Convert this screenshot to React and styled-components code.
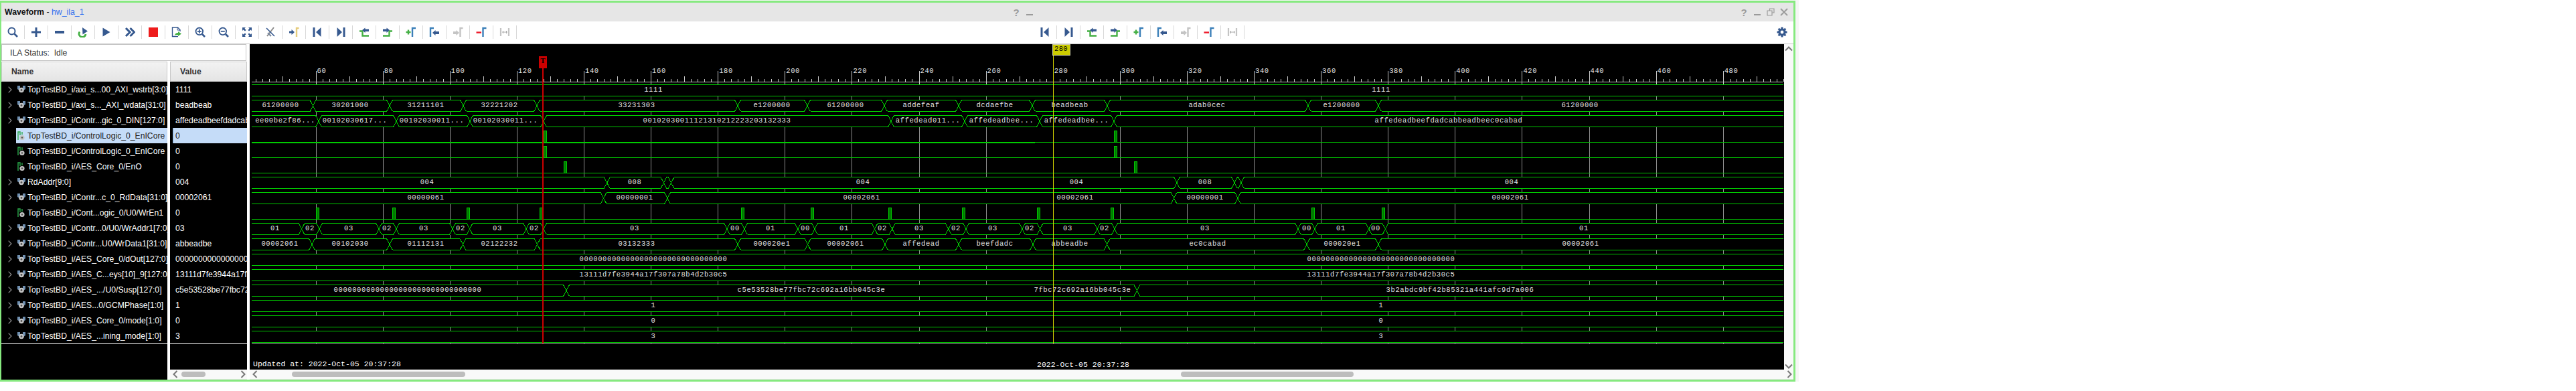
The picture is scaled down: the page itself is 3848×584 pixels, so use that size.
import React from "react";
import styled, { createGlobalStyle } from "styled-components";

const Global = createGlobalStyle`
  html, body { margin: 0; padding: 0; background: #fff; }
  body { font-family: "Liberation Sans", Arial, sans-serif; }
`;

const Window = styled.div`
  box-sizing: border-box; width: 2682px; height: 569px; margin-top: 1px;
  border: solid #86e97f; border-width: 3px 3px 3px 2px;
  box-shadow: 2px 2px 0 3px #f6f6f6;
  display: flex; flex-direction: column; background: #fff; overflow: hidden;
`;
const TitleBar = styled.div`
  height: 28px; flex: none; background: #e6e6e6; display: flex; align-items: center;
`;
const TitleSide = styled.div`
  width: 1506px; flex: none; padding-left: 5px; box-sizing: border-box;
  font-size: 12.3px; color: #222; white-space: nowrap;
  b { font-weight: 700; color: #111; }
  a { color: #2f6fef; }
`;
const TitleSpacer = styled.div` flex: 1; `;
const TitleSlot = styled.div`
  width: 20px; height: 20px; flex: none; display: flex; align-items: center; justify-content: center;
  color: #9a9a9a; font-weight: 700; font-size: 15px;
`;
const TitleEnd = styled.div` display: flex; padding-right: 4px; `;
const Toolbar = styled.div`
  height: 32px; flex: none; background: #fff; border-bottom: 2px solid #e4e4e4;
  display: flex; align-items: center;
`;
const ToolGroup = styled.div`
  display: flex; align-items: center; flex: none; margin-left: ${p => p.$offset || 0}px;
`;
const ToolItem = styled.div`
  width: 34px; height: 32px; flex: none; display: flex; align-items: center; justify-content: center;
  border-right: 1px solid transparent; position: relative;
  &::after { content: ""; position: absolute; right: -1px; top: 6px; width: 1px; height: 20px; background: #d8d8d8; }
`;
const GearSlot = styled.div`
  margin-left: auto; width: 34px; height: 32px; display: flex; align-items: center; justify-content: center;
`;
const Main = styled.div` flex: 1; display: flex; min-height: 0; `;
const LeftPane = styled.div` width: 371px; flex: none; display: flex; flex-direction: column; background: #fff; `;
const Status = styled.div`
  box-sizing: border-box; width: 366px; height: 25px; flex: none; margin-bottom: 1px;
  border: 1px solid #c4c4c4; padding-left: 12px; display: flex; align-items: center;
  font-size: 12.2px; color: #333; white-space: pre;
`;
const Columns = styled.div` flex: 1; display: flex; min-height: 0; `;
const NameCol = styled.div` width: 248px; flex: none; display: flex; flex-direction: column; background: #000; overflow: hidden; `;
const ValueCol = styled.div` width: 115px; margin-left: 4px; flex: none; display: flex; flex-direction: column; background: #000; overflow: hidden; `;
const Header = styled.div`
  height: 30px; flex: none; box-sizing: border-box; display: flex; align-items: center;
  padding-left: ${p => p.$pad}px; background: linear-gradient(#f2f2f2, #e4e4e4);
  border: 1px solid #c8c8c8; font-weight: 700; font-size: 12.2px; color: #333;
`;
const Rows = styled.div`
  height: 391px; flex: none; border-bottom: 1px solid #fff; font-size: 12.2px;
`;
const Fill = styled.div` flex: 1; `;
const Row = styled.div` height: 23px; display: flex; align-items: stretch; `;
const Chev = styled.div`
  width: 22px; flex: none; box-sizing: border-box; padding-left: 10px; display: flex; align-items: center;
`;
const RowBody = styled.div`
  flex: 1; min-width: 0; display: flex; align-items: center; gap: 3px; padding-left: 1px;
  background: ${p => (p.$sel ? "#c5dcf8" : "transparent")};
  color: ${p => (p.$sel ? "#222" : "#fff")};
`;
const RowIcon = styled.div` width: 13px; flex: none; display: flex; align-items: center; justify-content: center; `;
const RowText = styled.div` white-space: nowrap; overflow: hidden; flex: 1; `;
const ValueCell = styled.div`
  height: 23px; box-sizing: border-box; display: flex; align-items: center; white-space: nowrap; overflow: hidden;
  margin-left: ${p => (p.$sel ? 4 : 0)}px;
  padding-left: ${p => (p.$sel ? 3 : 8)}px;
  border-left: ${p => (p.$sel ? "1px solid #7aa7d8" : "none")};
  background: ${p => (p.$sel ? "#c5dcf8" : "#000")};
  color: ${p => (p.$sel ? "#222" : "#fff")};
`;
const WaveArea = styled.div` flex: 1; min-width: 0; display: flex; flex-direction: column; `;
const WaveTop = styled.div` height: 486px; flex: none; display: flex; `;
const WaveSvg = styled.svg`
  width: 2292px; height: 486px; flex: none; display: block; background: #000;
  shape-rendering: crispEdges;
  text { font-family: "Liberation Mono", monospace; font-size: 10.5px; letter-spacing: .6px; fill: #e4e4e4; }
`;
const VScroll = styled.div`
  flex: 1; background: #f9f9f9; display: flex; flex-direction: column; justify-content: space-between; align-items: center;
  padding: 3px 0 1px; 
`;
const HBar = styled.div`
  flex: ${p => (p.$fixed ? "0 0 14px" : "1")}; min-height: 0; background: #f9f9f9; display: flex; align-items: center; border-bottom: 1px solid #e4e4e4;
  padding: 0 ${p => p.$padR}px 0 ${p => p.$padL}px;
`;
const Thumb = styled.div`
  height: 8px; border-radius: 4px; background: #bdbdbd; flex: none;
  width: ${p => p.$w}px; margin-left: ${p => p.$ml}px;
`;
const ArrowEnd = styled.div` margin-left: auto; display: flex; `;

const B = "#36598f", G = "#45b045", Gy = "#c4c4c4";
const Ic = ({ children, w = 16, h = 16 }) => <svg width={w} height={h} viewBox="0 0 16 16">{children}</svg>;

const Search = () => <Ic><circle cx="6.5" cy="6.5" r="5" fill="none" stroke={B} strokeWidth="2"/><path d="M10.5 10.5L15 15" stroke={B} strokeWidth="2.6"/></Ic>;
const Plus = () => <Ic><path d="M1 8H15M8 1V15" stroke={B} strokeWidth="3"/></Ic>;
const Minus = () => <Ic><path d="M1 8H15" stroke={B} strokeWidth="4"/></Ic>;
const Rerun = () => <Ic><path d="M3 7.5A5 5 0 1 0 12 11" fill="none" stroke={G} strokeWidth="2.8"/><path d="M7 1L15 6.5L7.5 11.5Z" fill={B}/></Ic>;
const Play = () => <Ic><path d="M2.5 1.5L13.5 8L2.5 14.5Z" fill={B}/></Ic>;
const Fast = () => <Ic><path d="M2 2L8 8L2 14M8.5 2L14.5 8L8.5 14" fill="none" stroke={B} strokeWidth="3"/></Ic>;
const Stop = () => <svg width="14" height="14"><rect width="14" height="14" fill="#ee1c1c"/></svg>;
const Doc = () => <Ic><path d="M10 14.5H1.5V1H9.5L13 4.5V7" fill="none" stroke={B} strokeWidth="1.4"/><path d="M9 1V5H13" fill="none" stroke={B}/><path d="M5 12.5C5.5 10 7.5 9 10 9V7L15 10.5L10 14V12C8 12 6.5 12 5 12.5Z" fill={G}/></Ic>;
const ZoomIn = () => <Ic><circle cx="6.8" cy="6.8" r="5.3" fill="none" stroke={B} strokeWidth="1.8"/><path d="M3.8 6.8H9.8M6.8 3.8V9.8" stroke={B} strokeWidth="1.8"/><path d="M11 11L15 15" stroke={B} strokeWidth="2.6"/></Ic>;
const ZoomOut = () => <Ic><circle cx="6.8" cy="6.8" r="5.3" fill="none" stroke={B} strokeWidth="1.8"/><path d="M3.8 6.8H9.8" stroke={B} strokeWidth="1.8"/><path d="M11 11L15 15" stroke={B} strokeWidth="2.6"/></Ic>;
const Fit = () => <Ic><path d="M1 1H6L4.5 2.5L6.5 5L5 6.5L2.5 4.5L1 6ZM15 1H10L11.5 2.5L9.5 5L11 6.5L13.5 4.5L15 6ZM1 15H6L4.5 13.5L6.5 11L5 9.5L2.5 11.5L1 10ZM15 15H10L11.5 13.5L9.5 11L11 9.5L13.5 11.5L15 10Z" fill={B}/></Ic>;
const CursorX = () => <Ic><path d="M3 14L13 1" stroke="#8a8a8a" strokeWidth="2"/><path d="M2 2L14 14" stroke={B} strokeWidth="1.6"/><path d="M9 14L4 9" stroke="#7b8aa0" strokeWidth="2.2"/></Ic>;
const GoZero = () => <Ic><path d="M1 6.5H4.5V4L9 8L4.5 12V9.5H1Z" fill={B}/><path d="M12 15V2H15.5" fill="none" stroke="#e6cc7c" strokeWidth="2.4"/></Ic>;
const First = () => <Ic><rect x="1.5" y="1" width="3" height="14" fill={B}/><path d="M13.5 1V15L6 8Z" fill={B}/></Ic>;
const Last = () => <Ic><rect x="11.5" y="1" width="3" height="14" fill={B}/><path d="M2.5 1V15L10 8Z" fill={B}/></Ic>;
const PrevEdge = () => <Ic><path d="M15 13.5H5.5V6.5H1" fill="none" stroke={G} strokeWidth="2.4"/><path d="M5 5L9.5 1.5V3.5H15V7H9.5V9Z" fill={B}/></Ic>;
const NextEdge = () => <Ic><path d="M1 13.5H10.5V6.5H15" fill="none" stroke={G} strokeWidth="2.4"/><path d="M11 5L6.5 1.5V3.5H1V7H6.5V9Z" fill={B}/></Ic>;
const AddMark = () => <Ic><path d="M0.5 8H7.5M4 4.5V11.5" stroke={G} strokeWidth="2.4"/><path d="M10 15V2H15" fill="none" stroke="#3b7fb8" strokeWidth="2.4"/></Ic>;
const PrevMark = () => <Ic><path d="M2 15V2H7" fill="none" stroke="#3b7fb8" strokeWidth="2.4"/><path d="M5 9L9.5 5V7H15V11H9.5V13Z" fill={B}/></Ic>;
const NextMark = () => <Ic><path d="M1 7H5.5V5L10 9L5.5 13V11H1Z" fill={Gy}/><path d="M11.5 15V2H15.5" fill="none" stroke={Gy} strokeWidth="2.4"/></Ic>;
const DelMark = () => <Ic><path d="M0.5 8.5H8" stroke="#ee1c2c" strokeWidth="2.4"/><path d="M10.5 15V2H15.5" fill="none" stroke="#3b7fb8" strokeWidth="2.4"/></Ic>;
const Swap = () => <Ic><path d="M2 2V14M14 2V14" stroke={Gy} strokeWidth="2.2"/><path d="M4 8H12" stroke="#aaa"/><path d="M5.5 6V10M10.5 6V10" stroke="#aaa"/></Ic>;
const Gear = () => (
  <svg width="16" height="16" viewBox="0 0 16 16">
    <path d="M8 .5V15.5M.5 8H15.5M2.7 2.7L13.3 13.3M13.3 2.7L2.7 13.3" stroke={B} strokeWidth="3"/>
    <circle cx="8" cy="8" r="4.2" fill="none" stroke={B} strokeWidth="3.2"/>
    <circle cx="8" cy="8" r="2.4" fill="#fff"/>
  </svg>
);
const Help = () => <span>?</span>;
const Min = () => <svg width="12" height="12"><rect x="1" y="9" width="10" height="2" fill="#9a9a9a"/></svg>;
const Restore = () => <svg width="12" height="12" viewBox="0 0 12 12"><path d="M4.5 3.5V1H11V7H8M1 4H8V11H1Z" fill="none" stroke="#9a9a9a" strokeWidth="1.2"/></svg>;
const Close = () => <svg width="12" height="12" viewBox="0 0 12 12"><path d="M1 1L11 11M11 1L1 11" stroke="#9a9a9a" strokeWidth="1.8"/></svg>;

const ChevR = ({ c = "#8c8c8c", h = 10 }) => <svg width="6" height={h} viewBox="0 0 6 10"><path d="M.7 .7L5 5L.7 9.3" fill="none" stroke={c} strokeWidth="1.2"/></svg>;
const HArrow = ({ dir }) => <svg width="10" height="12" viewBox="0 0 10 12"><path d={dir === "l" ? "M7.5 1L2.5 6L7.5 11" : "M2.5 1L7.5 6L2.5 11"} fill="none" stroke="#777" strokeWidth="2"/></svg>;
const VArrow = ({ dir }) => <svg width="12" height="8" viewBox="0 0 12 8"><path d={dir === "u" ? "M1 6.5L6 1.5L11 6.5" : "M1 1.5L6 6.5L11 1.5"} fill="none" stroke="#777" strokeWidth="2"/></svg>;

const BusIcon = () => (
  <svg width="12" height="11" viewBox="0 0 12 11">
    <path d="M0 0H4V3H8V0H12V5L9 7H3L0 5Z" fill="#6f8fb0"/>
    <circle cx="6" cy="6.5" r="3.8" fill="#c4c4c4"/>
    <circle cx="6" cy="6.5" r="1.4" fill="#555"/>
  </svg>
);
const WireIcon = () => (
  <svg width="12" height="14" viewBox="0 0 12 14">
    <path d="M1 13V1H4V6" fill="none" stroke="#2aa84a" strokeWidth="1.4"/>
    <path d="M7 1V5" stroke="#2aa84a" strokeWidth="1.4"/>
    <circle cx="7" cy="9.5" r="3.6" fill="#c4c4c4"/>
    <circle cx="7" cy="9.5" r="1.3" fill="#555"/>
  </svg>
);

const tools1 = [Search, Plus, Minus, Rerun, Play, Fast, Stop, Doc, ZoomIn, ZoomOut, Fit, CursorX, GoZero, First, Last, PrevEdge, NextEdge, AddMark, PrevMark, NextMark, DelMark, Swap];
const tools2 = [First, Last, PrevEdge, NextEdge, AddMark, PrevMark, NextMark, DelMark, Swap];

const Z32 = "00000000000000000000000000000000";
const K32 = "13111d7fe3944a17f307a78b4d2b30c5";
const signals = [
  { n: "TopTestBD_i/axi_s...00_AXI_wstrb[3:0]", v: "1111" },
  { n: "TopTestBD_i/axi_s..._AXI_wdata[31:0]", v: "beadbeab" },
  { n: "TopTestBD_i/Contr...gic_0_DIN[127:0]", v: "affedeadbeefdadcabbeadbeec0cabad" },
  { n: "TopTestBD_i/ControlLogic_0_EnICore", v: "0", bit: true, sel: true },
  { n: "TopTestBD_i/ControlLogic_0_EnICore", v: "0", bit: true },
  { n: "TopTestBD_i/AES_Core_0/EnO", v: "0", bit: true },
  { n: "RdAddr[9:0]", v: "004" },
  { n: "TopTestBD_i/Contr...c_0_RdData[31:0]", v: "00002061" },
  { n: "TopTestBD_i/Cont...ogic_0/U0/WrEn1", v: "0", bit: true },
  { n: "TopTestBD_i/Contr...0/U0/WrAddr1[7:0]", v: "03" },
  { n: "TopTestBD_i/Contr...U0/WrData1[31:0]", v: "abbeadbe" },
  { n: "TopTestBD_i/AES_Core_0/dOut[127:0]", v: Z32 },
  { n: "TopTestBD_i/AES_C...eys[10]_9[127:0]", v: K32 },
  { n: "TopTestBD_i/AES_.../U0/Susp[127:0]", v: "c5e53528be77fbc72c692a16bb045c3e" },
  { n: "TopTestBD_i/AES...0/GCMPhase[1:0]", v: "1" },
  { n: "TopTestBD_i/AES_Core_0/mode[1:0]", v: "0" },
  { n: "TopTestBD_i/AES_...ining_mode[1:0]", v: "3" },
];

const buses = {
  0: { t: [], l: [[976, "1111"], [2063, "1111"]] },
  1: { t: [467.5, 582, 692, 802, 1102, 1206, 1321, 1432, 1542, 1654, 1954, 2059],
       l: [[419, "61200000"], [523, "30201000"], [636, "31211101"], [746, "32221202"], [951, "33231303"], [1153, "e1200000"], [1263, "61200000"], [1376, "addefeaf"], [1486, "dcdaefbe"], [1598, "beadbeab"], [1803, "adab0cec"], [2004, "e1200000"], [2360, "61200000"]] },
  2: { t: [476, 592, 702, 812, 1331, 1441, 1553, 1664],
       l: [[426, "ee00be2f86..."], [530, "00102030617..."], [645, "00102030011..."], [755, "00102030011..."], [1071, "00102030011121310212223203132333"], [1386, "affedead011..."], [1496, "affedeadbee..."], [1608, "affedeadbee..."], [2164, "affedeadbeefdadcabbeadbeec0cabad"]] },
  6: { t: [906.7, 991.4, 1002.6, 1758, 1844, 1854],
       l: [[638, "004"], [948, "008"], [1289, "004"], [1608, "004"], [1800, "008"], [2258, "004"]] },
  7: { t: [901.6, 997, 1753.6, 1849],
       l: [[636, "00000061"], [948, "00000001"], [1287, "00002061"], [1606, "00002061"], [1800, "00000001"], [2256, "00002061"]] },
  9: { t: [450.6, 477, 566, 592, 676, 701.6, 786, 812, 1086, 1112, 1191.8, 1217, 1306.6, 1332.7, 1416.8, 1443, 1527, 1553.6, 1639, 1665, 1939, 1964, 2044.7, 2069.4],
       l: [[411, "01"], [463, "02"], [521, "03"], [578, "02"], [633, "03"], [688, "02"], [743, "03"], [798, "02"], [948, "03"], [1098, "00"], [1151, "01"], [1203, "00"], [1261, "01"], [1318, "02"], [1373, "03"], [1428, "02"], [1483, "03"], [1538, "02"], [1595, "03"], [1650, "02"], [1800, "03"], [1952, "00"], [2003, "01"], [2055, "00"], [2366, "01"]] },
  10: { t: [466, 582, 691.4, 802.6, 1102, 1206.6, 1322, 1432, 1543, 1653.6, 1952, 2059],
       l: [[418, "00002061"], [523, "00102030"], [636, "01112131"], [746, "02122232"], [951, "03132333"], [1153, "000020e1"], [1263, "00002061"], [1376, "affedead"], [1486, "beefdadc"], [1598, "abbeadbe"], [1804, "ec0cabad"], [2005, "000020e1"], [2361, "00002061"]] },
  11: { t: [], l: [[976, Z32], [2063, Z32]] },
  12: { t: [], l: [[976, K32], [2063, K32]] },
  13: { t: [846, 1698.5],
       l: [[609, Z32], [1212, "c5e53528be77fbc72c692a16bb045c3e"], [1617, "7fbc72c692a16bb045c3e"], [2181, "3b2abdc9bf42b85321a441afc9d7a006"]] },
  14: { t: [], l: [[976, "1"], [2063, "1"]] },
  15: { t: [], l: [[976, "0"], [2063, "0"]] },
  16: { t: [], l: [[976, "3"], [2063, "3"]] },
};
const pulses = {
  3: [812, 1664],
  4: [812, 1664],
  5: [841.5, 1693.5],
  8: [471.5, 586, 696.5, 806, 1106.7, 1211, 1326.5, 1436.5, 1548.5, 1658.5, 1958.5, 2064],
};

const X0 = 376, X1 = 2664;
const GREEN = "#00cc00";
const topY = i => 126 + 23 * i + 0.5;
const botY = i => 143 + 23 * i + 0.5;

const busPath = (i, ts) => {
  const a = topY(i), b = botY(i);
  let d = "", prev = X0;
  ts.forEach(t => {
    d += `M${prev} ${a}H${t - 4.5}L${t + 4.5} ${b}M${prev} ${b}H${t - 4.5}L${t + 4.5} ${a}`;
    prev = t + 4.5;
  });
  return d + `M${prev} ${a}H${X1}M${prev} ${b}H${X1}`;
};

const majors = Array.from({ length: 22 }, (_, k) => ({ x: 471.6 + 100.1 * k, v: 60 + 20 * k }));
const minorTicks = Array.from({ length: 229 }, (_, k) => 381.5 + 10.01 * k);

function Waves() {
  return (
    <WaveSvg viewBox="373 66 2292 486">
      {majors.map(m => <line key={m.v} x1={Math.round(m.x) + .5} x2={Math.round(m.x) + .5} y1="126" y2="513" stroke="#8f8f8f" />)}
      {Object.keys(buses).map(i => <rect key={i} x={X0} y={topY(+i)} width={X1 - X0} height="17" fill="#000" />)}

      <rect x="376" y="122" width="2287" height="1" fill="#c8c8c8" />
      {minorTicks.map((x, k) => {
        const rel = k % 10;
        if (rel === 9) return null;
        const h = rel === 4 ? 8 : 4;
        return <rect key={k} x={Math.round(x)} y={122 - h} width="1" height={h} fill="#c8c8c8" />;
      })}
      {majors.map(m => <rect key={m.v} x={Math.round(m.x)} y="106" width="1" height="20" fill="#c8c8c8" />)}
      {majors.map(m => <text key={m.v} x={m.x + 2} y="109">{m.v}</text>)}

      {Object.entries(buses).map(([i, b]) => (
        <g key={i}>
          <path d={busPath(+i, b.t)} fill="none" stroke={GREEN} />
          {b.l.map(([x, s], k) => <text key={k} x={x} y={topY(+i) + 10.5} textAnchor="middle">{s}</text>)}
        </g>
      ))}
      <rect x={X0} y="212" width="1170" height="2" fill={GREEN} />
      {Object.entries(pulses).map(([i, xs]) => (
        <g key={i}>
          <path d={`M${X0} ${botY(+i)}H${X1}`} stroke={GREEN} />
          {xs.map(x => <rect key={x} x={Math.round(x) + .5} y={botY(+i) - 17} width="4" height="17" fill="#007a00" stroke={GREEN} />)}
        </g>
      ))}
      <rect x="376" y="513" width="2287" height="1" fill="#9a9a9a" />

      <text x="378" y="547" style={{ fontSize: "11.5px", letterSpacing: 0, fill: "#fff" }}>Updated at: 2022-Oct-05 20:37:28</text>
      <text x="1549" y="548" style={{ fontSize: "11.5px", letterSpacing: 0, fill: "#fff" }}>2022-Oct-05 20:37:28</text>

      <rect x="810" y="102" width="2" height="411" fill="#cc0000" />
      <rect x="805" y="84" width="12" height="18" fill="#cc0000" />
      <text x="811" y="94" textAnchor="middle" style={{ fill: "#000", fontWeight: 700, letterSpacing: 0, fontFamily: "Liberation Serif, serif", fontSize: "11px" }}>T</text>

      <rect x="1573" y="82" width="1" height="431" fill="#d4d400" />
      <rect x="1572" y="66" width="26" height="16" fill="#cccc00" stroke="#c8c8a0" />
      <text x="1585" y="76" textAnchor="middle" style={{ fill: "#000", letterSpacing: ".4px" }}>280</text>
    </WaveSvg>
  );
}

export default function App() {
  return (
    <>
      <Global />
      <Window>
        <TitleBar>
          <TitleSide><b>Waveform</b> - <a>hw_ila_1</a></TitleSide>
          <TitleSlot><Help /></TitleSlot>
          <TitleSlot><Min /></TitleSlot>
          <TitleSpacer />
          <TitleEnd>
            <TitleSlot><Help /></TitleSlot>
            <TitleSlot><Min /></TitleSlot>
            <TitleSlot><Restore /></TitleSlot>
            <TitleSlot><Close /></TitleSlot>
          </TitleEnd>
        </TitleBar>
        <Toolbar>
          <ToolGroup>{tools1.map((I, k) => <ToolItem key={k}><I /></ToolItem>)}</ToolGroup>
          <ToolGroup $offset={772}>{tools2.map((I, k) => <ToolItem key={k}><I /></ToolItem>)}</ToolGroup>
          <GearSlot><Gear /></GearSlot>
        </Toolbar>
        <Main>
          <LeftPane>
            <Status>{"ILA Status:  Idle"}</Status>
            <Columns>
              <NameCol>
                <Header $pad={14}>Name</Header>
                <Rows>
                  {signals.map((s, k) => (
                    <Row key={k}>
                      <Chev>{!s.bit && <ChevR />}</Chev>
                      <RowBody $sel={s.sel}>
                        <RowIcon>{s.bit ? <WireIcon /> : <BusIcon />}</RowIcon>
                        <RowText>{s.n}</RowText>
                      </RowBody>
                    </Row>
                  ))}
                </Rows>
                <Fill />
              </NameCol>
              <ValueCol>
                <Header $pad={14}>Value</Header>
                <Rows>
                  {signals.map((s, k) => <ValueCell key={k} $sel={s.sel}>{s.v}</ValueCell>)}
                </Rows>
                <Fill />
                <HBar $fixed $padL={3} $padR={1}>
                  <HArrow dir="l" />
                  <Thumb $w={36} $ml={4} />
                  <ArrowEnd><HArrow dir="r" /></ArrowEnd>
                </HBar>
              </ValueCol>
            </Columns>
          </LeftPane>
          <WaveArea>
            <WaveTop>
              <Waves />
              <VScroll><VArrow dir="u" /><VArrow dir="d" /></VScroll>
            </WaveTop>
            <HBar $padL={3} $padR={1}>
              <HArrow dir="l" />
              <Thumb $w={259} $ml={50} />
              <Thumb $w={258} $ml={1069} />
              <ArrowEnd><HArrow dir="r" /></ArrowEnd>
            </HBar>
          </WaveArea>
        </Main>
      </Window>
    </>
  );
}
